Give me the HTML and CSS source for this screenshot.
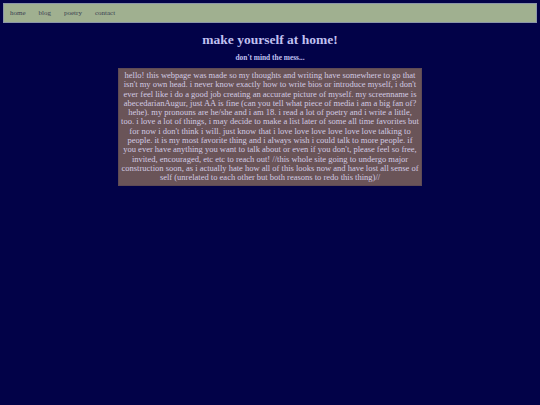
FILE: index.html
```html
<!DOCTYPE html>
<html>
<head>
<meta charset="utf-8">
<link rel="stylesheet" href="styles.css">
</head>
<body>
<nav class="nav">
  <a class="nav-link" href="#">home</a>
  <a class="nav-link" href="#">blog</a>
  <a class="nav-link" href="#">poetry</a>
  <a class="nav-link" href="#">contact</a>
</nav>
<main class="main">
  <h1 class="title">make yourself at home!</h1>
  <p class="subtitle">don't mind the mess...</p>
  <div class="about">hello! this webpage was made so my thoughts and writing have somewhere to go that isn't my own head. i never know exactly how to write bios or introduce myself, i don't ever feel like i do a good job creating an accurate picture of myself. my screenname is abecedarianAugur, just AA is fine (can you tell what piece of media i am a big fan of? hehe). my pronouns are he/she and i am 18. i read a lot of poetry and i write a little, too. i love a lot of things, i may decide to make a list later of some all time favorites but for now i don't think i will. just know that i love love love love love love talking to people. it is my most favorite thing and i always wish i could talk to more people. if you ever have anything you want to talk about or even if you don't, please feel so free, invited, encouraged, etc etc to reach out! //this whole site going to undergo major construction soon, as i actually hate how all of this looks now and have lost all sense of self (unrelated to each other but both reasons to redo this thing)//</div>
</main>
</body>
</html>
```
FILE: styles.css
```css
html, body {
  margin: 0;
  padding: 0;
  background: #020248;
}
body {
  padding: 3px;
  font-family: "Liberation Serif", "Times New Roman", serif;
}
.nav {
  display: flex;
  align-items: center;
  gap: 13px;
  height: 18px;
  padding: 0 6px;
  background: #a0b090;
  border: 1px solid #8b96a8;
}
.nav-link {
  font-size: 7px;
  color: #3a3f50;
  text-decoration: none;
}
.main {
  display: flex;
  flex-direction: column;
  align-items: center;
}
.title {
  margin: 9px 0 0;
  font-size: 13.5px;
  line-height: 16px;
  font-weight: bold;
  color: #c0c0f0;
}
.subtitle {
  margin: 6px 0 0;
  font-size: 7.4px;
  line-height: 8px;
  font-weight: bold;
  color: #c0c0f0;
}
.about {
  margin-top: 6px;
  width: 298px;
  padding: 2px;
  background: #6a5458;
  border: 1px solid #5e4a55;
  color: #d2cae2;
  font-size: 8.5px;
  line-height: 9.3px;
  text-align: center;
}
```
